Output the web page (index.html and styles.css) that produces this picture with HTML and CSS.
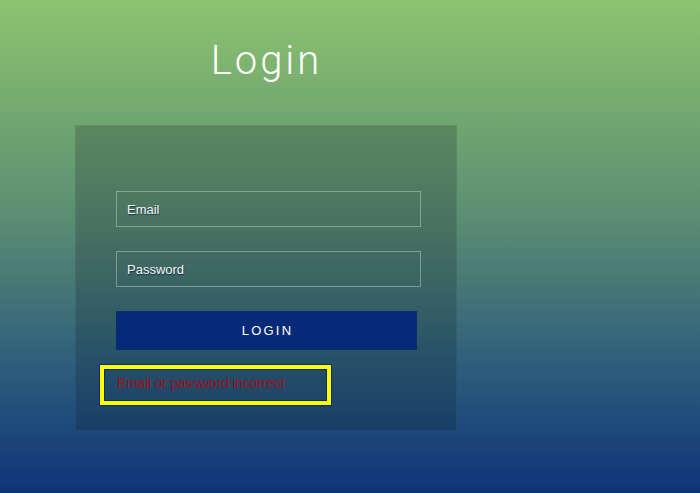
FILE: index.html
```html
<!DOCTYPE html>
<html lang="en">
<head>
<meta charset="utf-8">
<title>Login</title>
<link rel="stylesheet" href="styles.css">
</head>
<body>
<main class="wrap">
  <h1 class="title">Login</h1>
  <form class="card" onsubmit="return false">
    <input class="field" type="email" placeholder="Email">
    <input class="field" type="password" placeholder="Password">
    <button class="btn" type="submit">LOGIN</button>
    <div class="error">Email or password incorrect</div>
  </form>
</main>
</body>
</html>
```

FILE: styles.css
```css
html, body {
  margin: 0;
  height: 100%;
}
body {
  background: linear-gradient(to bottom, #8dc46f 0%, #5a8c72 45%, #2c5c7c 75%, #0e3478 100%);
  font-family: "Liberation Sans", Arial, sans-serif;
  overflow: hidden;
}
.wrap {
  width: 382px;
  margin-left: 75px;
  padding-top: 37px;
}
.title {
  margin: 0 0 40px;
  font-family: Roboto, "Liberation Sans", sans-serif;
  font-weight: 300;
  font-size: 40px;
  line-height: 48px;
  letter-spacing: 3px;
  text-align: center;
  color: #ffffff;
  padding-left: 1px;
}
.card {
  box-sizing: border-box;
  height: 306px;
  background: rgba(10, 20, 30, 0.2);
  border: 1px solid rgba(255, 255, 255, 0.05);
  padding: 65px 0 0 40px;
  display: flex;
  flex-direction: column;
  align-items: flex-start;
}
.field {
  box-sizing: border-box;
  width: 305px;
  height: 36px;
  margin: 0 0 24px;
  padding: 0 10px;
  background: transparent;
  border: 1px solid rgba(200, 225, 210, 0.45);
  font-family: "Liberation Sans", Arial, sans-serif;
  font-size: 13px;
  color: #f2f6f2;
  outline: none;
}
.field::placeholder {
  color: #f4f8f4;
  opacity: 1;
  text-shadow: 0.5px 0.5px 1px rgba(10, 40, 70, 0.9);
}
.btn {
  box-sizing: border-box;
  width: 301px;
  height: 39px;
  margin: 0;
  padding: 0 0 0 2px;
  background: #062a77;
  border: 1px solid #0a2e6c;
  color: #ffffff;
  font-family: "Liberation Sans", Arial, sans-serif;
  font-size: 13px;
  letter-spacing: 2.2px;
}
.error {
  box-sizing: border-box;
  margin: 15px 0 0 -16px;
  width: 231px;
  height: 40px;
  border: 4px solid #ffff00;
  box-shadow: 0 0 0 1px #0b2d6c, inset 0 0 0 1px #0b2d6c;
  padding: 4px 0 0 13px;
  color: #9c1218;
  font-size: 14px;
  line-height: 20px;
  letter-spacing: -0.2px;
}
```
